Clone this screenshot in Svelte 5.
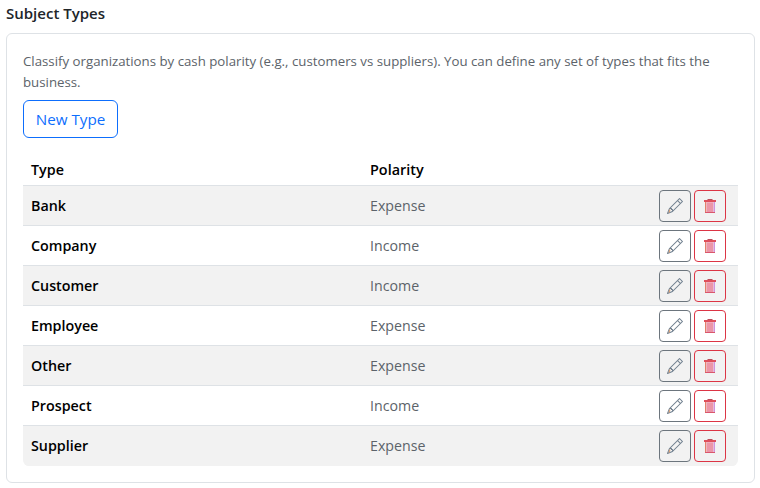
<script>
  const rows = [
    { name: "Bank", polarity: "Expense" },
    { name: "Company", polarity: "Income" },
    { name: "Customer", polarity: "Income" },
    { name: "Employee", polarity: "Expense" },
    { name: "Other", polarity: "Expense" },
    { name: "Prospect", polarity: "Income" },
    { name: "Supplier", polarity: "Expense" }
  ];
</script>

<div class="page">
  <h2>Subject Types</h2>
  <section class="card">
    <p>Classify organizations by cash polarity (e.g., customers vs suppliers). You can define any set of types that fits the business.</p>
    <button class="new">New Type</button>
    <div class="table">
      <div class="row head">
        <span class="type">Type</span>
        <span class="polarity">Polarity</span>
      </div>
      {#each rows as row, i (row.name)}
        <div class="row" class:odd={i % 2 === 0}>
          <span class="type">{row.name}</span>
          <span class="polarity">{row.polarity}</span>
          <div class="actions">
            <button class="icon edit" aria-label="Edit">
              <svg viewBox="0 0 16 16" width="16" height="16">
                <path fill="#71808f" d="M12.146.146a.5.5 0 0 1 .708 0l3 3a.5.5 0 0 1 0 .708l-10 10a.5.5 0 0 1-.168.11l-5 2a.5.5 0 0 1-.65-.65l2-5a.5.5 0 0 1 .11-.168zM11.207 2.5 13.5 4.793 14.793 3.5 12.5 1.207zm1.586 3L10.5 3.207 4 9.707V10h.5a.5.5 0 0 1 .5.5v.5h.5a.5.5 0 0 1 .5.5v.5h.293zm-9.761 5.175-.106.106-1.528 3.821 3.821-1.528.106-.106A.5.5 0 0 1 5 12.5V12h-.5a.5.5 0 0 1-.5-.5V11h-.5a.5.5 0 0 1-.468-.325"/>
                <path fill="#d99a6c" d="M2.6 11.2 1.5 14.5l1 .2 1-3z"/>
              </svg>
            </button>
            <button class="icon del" aria-label="Delete">
              <svg viewBox="0 0 16 16" width="16" height="16">
                <rect x="5.5" y="1" width="5" height="1.2" fill="#b9505c"/>
                <rect x="2" y="2" width="12" height="2" fill="#df4f5c"/>
                <rect x="3" y="4" width="10" height="11" fill="#f1c3d2"/>
                <rect x="3" y="4" width="1.2" height="11" fill="#e3806a"/>
                <rect x="5.5" y="4.5" width="1" height="9.5" fill="#e66a7e"/>
                <rect x="7.5" y="4.5" width="1" height="9.5" fill="#e66a7e"/>
                <rect x="9.5" y="4.5" width="1" height="9.5" fill="#e66a7e"/>
                <rect x="11.8" y="4" width="1.2" height="11" fill="#cf93e0"/>
                <rect x="3" y="14" width="10" height="1" fill="#d9566c"/>
              </svg>
            </button>
          </div>
        </div>
      {/each}
    </div>
  </section>
</div>

<style>
  :global(body) {
    margin: 0;
    background: #fff;
  }

  .page {
    width: 760px;
    height: 488px;
    padding: 3px 5px 5px 6px;
    box-sizing: border-box;
    font-family: "Open Sans", "Noto Sans", sans-serif;
    color: #212529;
    overflow: hidden;
  }

  h2 {
    margin: 0 0 10px;
    height: 20px;
    font-size: 15px;
    line-height: 20px;
    font-weight: 600;
  }

  .card {
    box-sizing: border-box;
    height: 450px;
    padding: 16px;
    border: 1px solid #dee2e6;
    border-radius: 6px;
  }

  p {
    margin: 0 0 7px;
    padding-top: 1px;
    font-size: 13.25px;
    line-height: 21px;
    color: #5c636a;
  }

  button {
    font: inherit;
    background: transparent;
    cursor: pointer;
    box-sizing: border-box;
  }

  .new {
    display: block;
    width: 95px;
    height: 38px;
    padding: 0;
    border: 1px solid #0d6efd;
    border-radius: 6px;
    color: #0d6efd;
    font-size: 15.2px;
  }

  .table {
    margin-top: 12px;
    border-radius: 6px;
    overflow: hidden;
  }

  .row {
    display: grid;
    grid-template-columns: 339px 1fr auto;
    align-items: center;
    height: 40px;
    padding: 0 12px 0 8px;
    box-sizing: border-box;
    border-bottom: 1px solid #dee2e6;
  }

  .row.head {
    height: 36px;
    padding-top: 4px;
    color: #000;
  }

  .row.head .polarity {
    color: #000;
    font-weight: 600;
    font-size: 14.4px;
  }

  .row.odd {
    background: #f2f2f2;
  }

  .row:last-child {
    border-bottom-color: #f2f2f2;
  }

  .type {
    font-weight: 600;
    color: #000;
    font-size: 14.3px;
  }

  .polarity {
    color: #5c636a;
    font-size: 14.2px;
  }

  .actions {
    display: flex;
    gap: 3px;
  }

  .icon {
    width: 32px;
    height: 32px;
    padding: 0;
    border-radius: 4px;
    display: grid;
    place-items: center;
  }

  .edit {
    border: 1px solid #6c757d;
  }

  .del {
    border: 1px solid #dc3545;
  }
</style>
